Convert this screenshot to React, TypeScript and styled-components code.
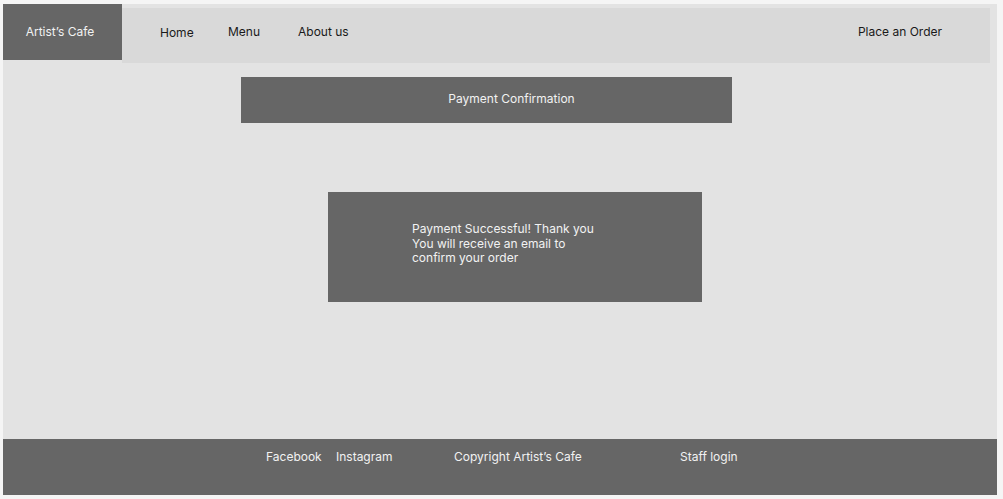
import React from 'react';
import styled, { createGlobalStyle } from 'styled-components';

const GlobalStyle = createGlobalStyle`
  html, body {
    margin: 0;
    padding: 0;
    background: #f5f5f5;
  }
  body {
    font-family: Inter, "Noto Sans", Arial, sans-serif;
    font-size: 12px;
  }
`;

const Frame = styled.div`
  margin: 4px 0 0 3px;
  width: 994px;
  height: 491px;
  background: #e3e3e3;
  display: flex;
  flex-direction: column;
`;

const Header = styled.header`
  display: flex;
  align-items: flex-start;
`;

const Logo = styled.div`
  width: 119px;
  height: 56px;
  background: #666666;
  color: #f2f2f2;
  display: flex;
  align-items: center;
  justify-content: center;
  padding-right: 5px;
  box-sizing: border-box;
  line-height: 16px;
`;

const Nav = styled.nav`
  margin-top: 4px;
  width: 868px;
  height: 55px;
  background: #d9d9d9;
  display: flex;
  align-items: flex-start;
  padding: 16px 48px 0 38px;
  box-sizing: border-box;
  color: #1a1a1a;
`;

const NavLink = styled.a<{ $width?: number; $drop?: number }>`
  display: block;
  width: ${(p) => (p.$width ? `${p.$width}px` : 'auto')};
  margin-top: ${(p) => p.$drop ?? 0}px;
  line-height: 16px;
`;

const OrderLink = styled(NavLink)`
  margin-left: auto;
`;

const Main = styled.main`
  flex: 1;
  display: flex;
  flex-direction: column;
  align-items: flex-start;
`;

const TitleBar = styled.div`
  margin: 14px 0 0 238px;
  width: 491px;
  height: 46px;
  background: #666666;
  color: #f2f2f2;
  display: flex;
  align-items: center;
  justify-content: center;
  padding: 0 0 2px 50px;
  box-sizing: border-box;
  line-height: 16px;
`;

const MessageCard = styled.div`
  margin: 69px 0 0 325px;
  width: 374px;
  height: 110px;
  background: #666666;
  color: #f2f2f2;
  box-sizing: border-box;
  padding: 30px 0 0 84px;
  line-height: 14.5px;
`;

const Footer = styled.footer`
  height: 56px;
  background: #666666;
  color: #f2f2f2;
  display: flex;
  align-items: flex-start;
  padding: 10px 0 0 263px;
  box-sizing: border-box;
  line-height: 16px;
`;

const FooterLink = styled.a<{ $width?: number }>`
  display: block;
  width: ${(p) => (p.$width ? `${p.$width}px` : 'auto')};
`;

export default function App() {
  return (
    <>
      <GlobalStyle />
      <Frame>
        <Header>
          <Logo>Artist’s Cafe</Logo>
          <Nav>
            <NavLink $width={68} $drop={1}>Home</NavLink>
            <NavLink $width={70}>Menu</NavLink>
            <NavLink>About us</NavLink>
            <OrderLink>Place an Order</OrderLink>
          </Nav>
        </Header>
        <Main>
          <TitleBar>Payment Confirmation</TitleBar>
          <MessageCard>
            Payment Successful! Thank you
            <br />
            You will receive an email to
            <br />
            confirm your order
          </MessageCard>
        </Main>
        <Footer>
          <FooterLink $width={70}>Facebook</FooterLink>
          <FooterLink $width={118}>Instagram</FooterLink>
          <FooterLink $width={226}>Copyright Artist’s Cafe</FooterLink>
          <FooterLink>Staff login</FooterLink>
        </Footer>
      </Frame>
    </>
  );
}
